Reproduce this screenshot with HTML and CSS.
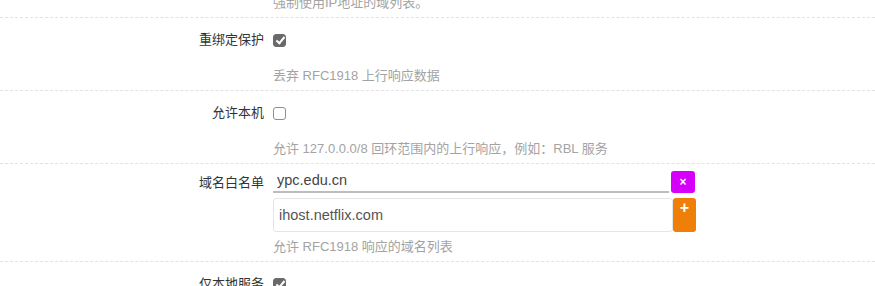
FILE: index.html
```html
<!DOCTYPE html>
<html lang="zh-CN">
<head>
  <meta charset="UTF-8">
  <title>DNS 设置</title>
  <link rel="stylesheet" href="styles.css">
</head>
<body>

  <div class="section">
    <div class="row row-tail">
      <div class="label"></div>
      <div class="field">
        <div class="desc">强制使用IP地址的域列表。</div>
      </div>
    </div>

    <div class="row">
      <label class="label" for="rebind">重绑定保护</label>
      <div class="field">
        <div class="control">
          <input type="checkbox" id="rebind" class="cbox" checked>
        </div>
        <div class="desc">丢弃 RFC1918 上行响应数据</div>
      </div>
    </div>

    <div class="row">
      <label class="label" for="localhost">允许本机</label>
      <div class="field">
        <div class="control">
          <input type="checkbox" id="localhost" class="cbox">
        </div>
        <div class="desc">允许 127.0.0.0/8 回环范围内的上行响应，例如：RBL 服务</div>
      </div>
    </div>

    <div class="row">
      <label class="label label-list" for="domain0">域名白名单</label>
      <div class="field">
        <div class="dynlist">
          <div class="item">
            <input type="text" id="domain0" class="item-value" value="ypc.edu.cn" readonly>
            <button class="btn btn-remove">×</button>
          </div>
          <div class="item item-new">
            <input type="text" class="item-input" value="ihost.netflix.com">
            <button class="btn btn-add">+</button>
          </div>
        </div>
        <div class="desc desc-list">允许 RFC1918 响应的域名列表</div>
      </div>
    </div>

    <div class="row">
      <label class="label" for="localservice">仅本地服务</label>
      <div class="field">
        <div class="control">
          <input type="checkbox" id="localservice" class="cbox" checked>
        </div>
      </div>
    </div>
  </div>

</body>
</html>
```

FILE: styles.css
```css
body {
  margin: 0;
  font-family: "Liberation Sans", "Noto Sans CJK SC", sans-serif;
  font-size: 13px;
  color: #333;
  background-color: #fff;
  overflow: hidden;
}
.section {
  margin-top: -6px;
}
.row {
  display: grid;
  grid-template-columns: 264px 423px;
  column-gap: 9px;
  padding: 7px 0 5px;
  border-bottom: 1px dashed #e2e2e2;
}
.row-tail {
  padding-top: 0;
}
.label {
  text-align: right;
  line-height: 30px;
  color: #333;
}
.label-list {
  line-height: 24px;
}
.control {
  height: 30px;
  display: flex;
  align-items: center;
}
.cbox {
  appearance: none;
  -webkit-appearance: none;
  width: 13px;
  height: 13px;
  margin: 0;
  border: 1px solid #8f8f8f;
  border-radius: 3px;
  background-color: #fff;
  position: relative;
}
.cbox:checked {
  background-color: #6a6a6a;
  border-color: #6a6a6a;
}
.cbox:checked::after {
  content: "";
  position: absolute;
  left: 3.5px;
  top: 0.5px;
  width: 3px;
  height: 7px;
  border: solid #fff;
  border-width: 0 2px 2px 0;
  transform: rotate(40deg);
}
.desc {
  margin-top: 12px;
  line-height: 18px;
  font-size: 13px;
  color: #a3a3a3;
  white-space: nowrap;
}
.row-tail .desc {
  margin-top: 0;
}
.desc-list {
  margin-top: 6px;
}
.dynlist {
  display: flex;
  flex-direction: column;
  gap: 5px;
}
.item {
  display: flex;
  align-items: flex-start;
}
.item-value {
  width: 396px;
  height: 22px;
  box-sizing: border-box;
  padding: 0 4px 2px;
  border: none;
  border-bottom: 2px solid #bdbdbd;
  font-family: inherit;
  font-size: 14.5px;
  color: #444;
  outline: none;
}
.item-input {
  width: 400px;
  height: 34px;
  box-sizing: border-box;
  padding: 0 5px;
  border: 1px solid #e1e6e6;
  border-radius: 3px;
  font-family: inherit;
  font-size: 14.5px;
  color: #555;
}
.btn {
  border: none;
  color: #fff;
  font-family: inherit;
  font-weight: bold;
  padding: 0;
  cursor: pointer;
}
.btn-remove {
  width: 24px;
  height: 22px;
  margin-left: 2px;
  border-radius: 3px;
  background-color: #d600fa;
  font-size: 12px;
}
.btn-add {
  width: 23px;
  height: 34px;
  border-radius: 3px;
  background-color: #ef7f08;
  font-size: 16px;
  line-height: 18px;
  display: flex;
  justify-content: center;
  align-items: flex-start;
  padding-top: 1px;
}
```
